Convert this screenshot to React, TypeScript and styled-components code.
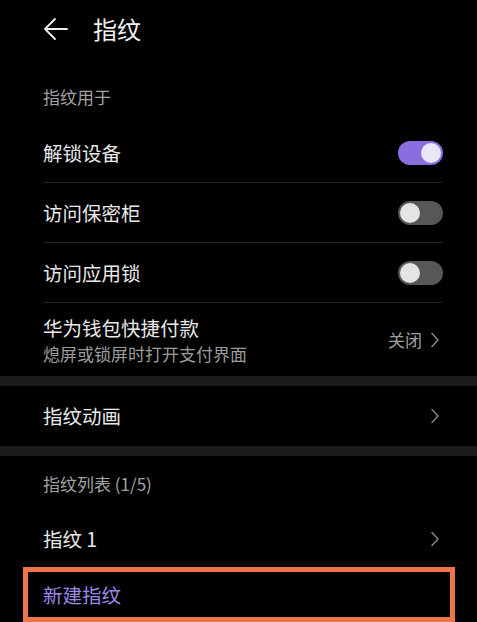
import React from 'react'
import styled, { createGlobalStyle } from 'styled-components'

const GlobalStyle = createGlobalStyle`
  html, body {
    margin: 0;
    padding: 0;
    background: #000;
  }
  body {
    font-family: "Noto Sans CJK SC", "Noto Sans", sans-serif;
    color: #e6e6e6;
  }
`

type ToggleProps = { on?: boolean }

const Toggle = ({ on }: ToggleProps) => (
  <Track $on={on}>
    <Knob $on={on} />
  </Track>
)

const Chevron = () => (
  <ChevronBox width="10" height="16" viewBox="0 0 10 16">
    <path d="M2 1.5 L8 8 L2 14.5" fill="none" stroke="#8a8a8a" strokeWidth="1.4" strokeLinecap="round" strokeLinejoin="round" />
  </ChevronBox>
)

const BackArrow = () => (
  <svg width="26" height="24" viewBox="0 0 26 24">
    <path d="M24 12 H2 M12 2 L2 12 L12 22" fill="none" stroke="#eeeeee" strokeWidth="1.8" strokeLinecap="round" strokeLinejoin="round" />
  </svg>
)

const App = () => {
  return (
    <Screen>
      <GlobalStyle />
      <Header>
        <BackArrow />
        <Title>指纹</Title>
      </Header>

      <Section>
        <Label $top={12}>指纹用于</Label>
        <Row>
          <ItemText>解锁设备</ItemText>
          <Toggle on />
        </Row>
        <Row>
          <ItemText>访问保密柜</ItemText>
          <Toggle />
        </Row>
        <Row>
          <ItemText>访问应用锁</ItemText>
          <Toggle />
        </Row>
        <Row $tall $last>
          <TextStack>
            <ItemText>华为钱包快捷付款</ItemText>
            <SubText>熄屏或锁屏时打开支付界面</SubText>
          </TextStack>
          <Trail>
            <TrailText>关闭</TrailText>
            <Chevron />
          </Trail>
        </Row>
      </Section>

      <Band />

      <Section>
        <Row $last>
          <ItemText>指纹动画</ItemText>
          <Chevron />
        </Row>
      </Section>

      <Band />

      <Section>
        <Label $small>指纹列表 (1/5)</Label>
        <Row $last $short>
          <ItemText>指纹 1</ItemText>
          <Chevron />
        </Row>
        <Highlighted>
          <AccentText>新建指纹</AccentText>
        </Highlighted>
      </Section>
    </Screen>
  )
}

const Screen = styled.div`
  width: 477px;
  height: 622px;
  overflow: hidden;
  background: #000;
  display: flex;
  flex-direction: column;
`

const Header = styled.div`
  height: 58px;
  display: flex;
  align-items: center;
  gap: 24px;
  padding-left: 43px;
  box-sizing: border-box;
`

const Title = styled.div`
  font-size: 24px;
  font-weight: 400;
  color: #f2f2f2;
  line-height: 1;
`

const Section = styled.div`
  display: flex;
  flex-direction: column;
`

const Label = styled.div<{ $small?: boolean; $top?: number }>`
  height: ${(p) => (p.$small ? 54 : 65)}px;
  display: flex;
  align-items: center;
  box-sizing: border-box;
  padding: ${(p) => p.$top ?? 0}px 0 0 43px;
  font-size: 17px;
  color: #a3a3a3;
`

const Row = styled.div<{ $tall?: boolean; $last?: boolean; $short?: boolean }>`
  height: ${(p) => (p.$tall ? 73 : p.$short ? 57 : 60)}px;
  margin: 0 34px 0 43px;
  display: flex;
  align-items: center;
  justify-content: space-between;
  box-sizing: border-box;
  border-bottom: ${(p) => (p.$last ? 'none' : '1px solid #1f1f1f')};
`

const ItemText = styled.div`
  font-size: 19.5px;
  color: #e8e8e8;
  line-height: 1.2;
`

const TextStack = styled.div`
  display: flex;
  flex-direction: column;
  gap: 3px;
  padding-top: 2px;
`

const SubText = styled.div`
  font-size: 17px;
  color: #9c9c9c;
  line-height: 1.3;
`

const Trail = styled.div`
  display: flex;
  align-items: center;
  gap: 8px;
`

const TrailText = styled.span`
  font-size: 17px;
  color: #a0a0a0;
`

const ChevronBox = styled.svg`
  margin-right: 3px;
  flex-shrink: 0;
`

const Band = styled.div`
  height: 10px;
  background: #1b1b1b;
`

const Highlighted = styled.div`
  height: 55px;
  margin: 0 22px 0 23px;
  border: 5px solid #ee7449;
  box-sizing: border-box;
  display: flex;
  align-items: center;
  padding-left: 15px;
`

const AccentText = styled.div`
  font-size: 19.5px;
  color: #9a88e6;
`

const Track = styled.div<{ $on?: boolean }>`
  width: 45px;
  height: 24px;
  border-radius: 12px;
  background: ${(p) => (p.$on ? '#8a6ee0' : '#575757')};
  position: relative;
  flex-shrink: 0;
`

const Knob = styled.div<{ $on?: boolean }>`
  position: absolute;
  top: 2px;
  left: ${(p) => (p.$on ? 23 : 2)}px;
  width: 20px;
  height: 20px;
  border-radius: 50%;
  background: ${(p) => (p.$on ? '#ebe6f7' : '#e4e4e4')};
`

export default App
